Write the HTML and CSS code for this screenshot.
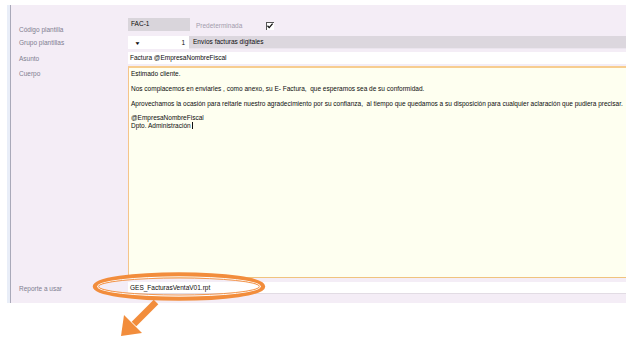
FILE: index.html
```html
<!DOCTYPE html>
<html lang="es">
<head>
    <meta charset="UTF-8">
    <title>Plantilla de correo</title>
    <link rel="stylesheet" href="styles.css">
</head>
<body>
    <div id="page">
        <div id="panel">
            <div class="row row-code">
                <div class="label">Código plantilla</div>
                <div class="code-line">
                    <div class="code-box">FAC-1</div>
                    <div class="soft-label">Predeterminada</div>
                    <div class="check">
                        <svg width="8" height="8" viewBox="0 0 8 8"><path d="M1.5 3.8 L3.2 5.6 L6.6 1.6" fill="none" stroke="#111" stroke-width="1.3"/></svg>
                    </div>
                </div>
            </div>

            <div class="row row-group">
                <div class="label">Grupo plantillas</div>
                <div class="group-line">
                    <div class="group-pick"><span class="arrow">&#9660;</span><span>1</span></div>
                    <div class="group-name">Envíos facturas digitales</div>
                </div>
            </div>

            <div class="row row-subject">
                <div class="label">Asunto</div>
                <div class="field">Factura @EmpresaNombreFiscal</div>
            </div>

            <div class="row row-body">
                <div class="label">Cuerpo</div>
                <div class="body-box">
                    <p>Estimado cliente.</p>
                    <p>Nos complacemos en enviarles , como anexo, su E- Factura,&nbsp; que esperamos sea de su conformidad.</p>
                    <p>Aprovechamos la ocasión para reitarle nuestro agradecimiento por su confianza,&nbsp; al tiempo que quedamos a su disposición para cualquier aclaración que pudiera precisar.</p>
                    <p>@EmpresaNombreFiscal<br>Dpto. Administración<span class="caret"></span></p>
                </div>
            </div>

            <div class="row row-report">
                <div class="label">Reporte a usar</div>
                <div class="field report">GES_FacturasVentaV01.rpt</div>
            </div>
        </div>

        <svg id="callout" width="634" height="343" viewBox="0 0 634 343">
            <ellipse cx="179" cy="286.5" rx="84" ry="12" fill="none" stroke="#f28d3c" stroke-width="4.5"/>
            <ellipse cx="179" cy="286.5" rx="81.5" ry="9.6" fill="none" stroke="#ffffff" stroke-width="1"/>
            <ellipse cx="179" cy="286.5" rx="80.3" ry="8.5" fill="none" stroke="#f28d3c" stroke-width="0.9"/>
            <path d="M156 302 L134 324" stroke="#f28d3c" stroke-width="6.5" stroke-linecap="butt"/>
            <polygon points="121,336 124,315 142,333" fill="#f28d3c"/>
        </svg>
    </div>
</body>
</html>
```

FILE: styles.css
```css
body {
    margin: 0;
    background: #ffffff;
    font-family: "Liberation Sans", Arial, sans-serif;
    font-size: 6.5px;
    color: #0c0c0c;
}

#page {
    position: relative;
    width: 634px;
    height: 343px;
    overflow: hidden;
}

#panel {
    margin: 5px 0 0 10px;
    width: 615px;
    padding: 13px 0 9px 0;
    background: #f4edf6;
    border-left: 1px solid #a9a9b9;
    box-shadow: -3px 0 0 #e9eef8;
}

.row {
    display: grid;
    grid-template-columns: 117px 1fr;
}

.label {
    padding-left: 8px;
    color: #807e90;
    align-self: center;
}

.row-code {
    height: 13px;
}

.row-code .label {
    align-self: end;
    margin-bottom: -2px;
}

.code-line {
    display: flex;
    align-items: center;
}

.code-box {
    width: 59px;
    height: 13px;
    line-height: 11px;
    padding-left: 3px;
    background: #d9d5db;
}

.soft-label {
    margin-left: 6px;
    width: 70px;
    color: #a29cac;
    padding-top: 2px;
}

.check {
    width: 8px;
    height: 8px;
    margin-top: 2px;
    background: #ffffff;
    border-top: 1px solid #555;
    border-left: 1px solid #555;
    box-sizing: border-box;
    display: flex;
}

.check svg {
    margin: -1px 0 0 -1px;
}

.row-group {
    height: 12px;
    margin-top: 5px;
}

.group-line {
    display: flex;
}

.group-pick {
    width: 61px;
    background: #ffffff;
    display: flex;
    justify-content: space-between;
    align-items: center;
    padding: 0 4px 0 7px;
    box-sizing: border-box;
}

.arrow {
    font-size: 5px;
    transform: scaleX(1.3);
}

.group-name {
    flex: 1;
    background: #dcd7de;
    padding-left: 4px;
    line-height: 12px;
    border-bottom: 1px solid #ebe5ee;
}

.row-subject {
    height: 12px;
    margin-top: 4px;
}

.field {
    background: #ffffff;
    padding-left: 2px;
    line-height: 12px;
}

.row-body {
    height: 212px;
    margin-top: 2px;
}

.row-body .label {
    align-self: start;
    padding-top: 4px;
}

.body-box {
    background: #fefff0;
    border-top: 2px solid #f7cd8f;
    border-left: 1px solid #f5c58a;
    border-bottom: 1px solid #f0c37e;
    padding: 2px 2px 0 2px;
    line-height: 7.4px;
}

.body-box p {
    margin: 0 0 7.4px 0;
}

.caret {
    display: inline-block;
    width: 1px;
    height: 7px;
    margin-left: 1px;
    background: #111;
    vertical-align: -1px;
}

.row-report {
    height: 12px;
    margin-top: 4px;
}

.report {
    line-height: 11px;
    border-bottom: 1px solid #e2dce4;
}

#callout {
    position: absolute;
    left: 0;
    top: 0;
}
```
